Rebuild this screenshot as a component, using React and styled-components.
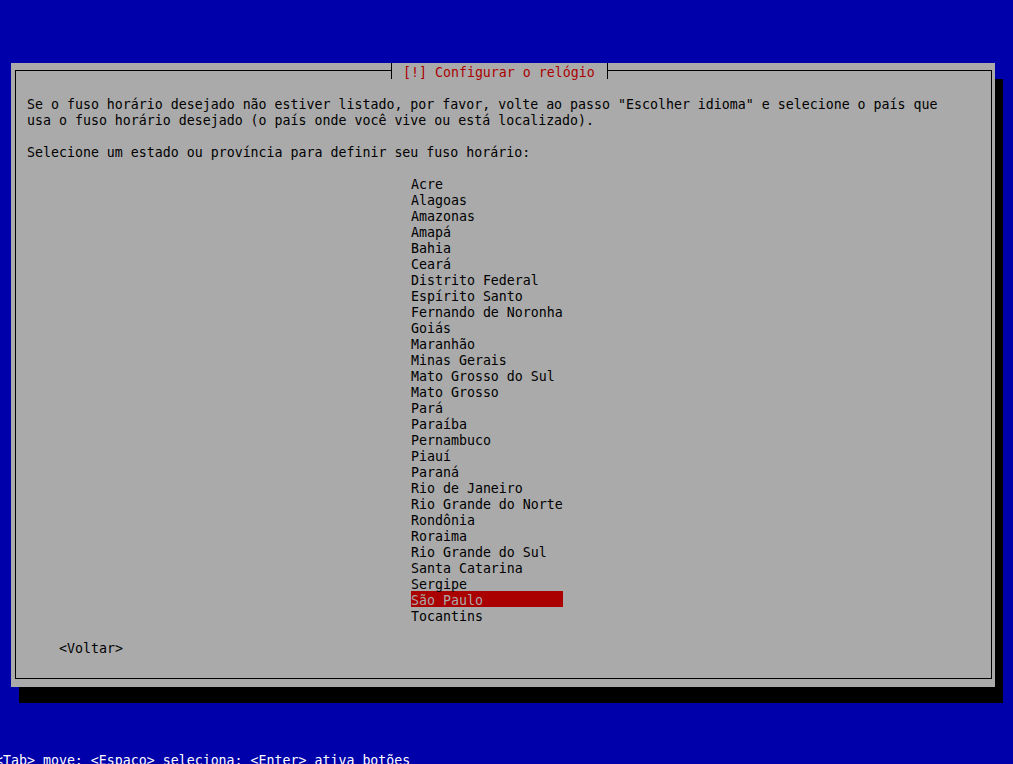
import styled, { createGlobalStyle } from 'styled-components';

const GlobalStyle = createGlobalStyle`
  html, body {
    margin: 0;
    padding: 0;
    background: #0000aa;
  }
  body {
    font-family: "DejaVu Sans Mono", "Liberation Mono", monospace;
    font-size: 13.288px;
    line-height: 16px;
  }
`;

// text sits 2px lower in its 16px cell than the font centres it
const Screen = styled.div`
  width: 1013px;
  height: 764px;
  overflow: hidden;
  background: #0000aa;
  padding: 63px 0 0 11px;
  box-sizing: border-box;
  white-space: pre;
`;

const Dialog = styled.div`
  width: 984px;
  height: 624px;
  box-sizing: border-box;
  background: #aaaaaa;
  box-shadow: 8px 16px 0 0 #000;
  padding: 7px 3px 8px 4px;
  display: flex;
`;

const Frame = styled.div`
  position: relative;
  flex: 1;
  border: 1px solid #000;
  padding: 24px 0 0 11px;
  color: #000;
`;

const Title = styled.div`
  position: absolute;
  top: -8px;
  left: 375px;
  height: 16px;
  box-sizing: border-box;
  padding: 2px 12px 0 11px;
  background: #aaaaaa;
  border-left: 1px solid #000;
  border-right: 1px solid #000;
  color: #aa0000;
`;

const Text = styled.div`
  padding-top: 2px;
  margin-bottom: ${(p) => (p.gap || 2) - 2}px;
`;

const List = styled.ul`
  list-style: none;
  margin: 0 0 16px 384px;
  padding: 0;
  width: 152px;
`;

const Item = styled.li`
  height: 16px;
  box-sizing: border-box;
  padding-top: 2px;
  background: ${(p) => (p.selected ? '#aa0000' : 'transparent')};
  color: ${(p) => (p.selected ? '#aaaaaa' : '#000')};
`;

const Button = styled.div`
  margin-left: 32px;
  padding-top: 2px;
`;

const StatusLine = styled.div`
  margin: 64px 0 0 -16px;
  padding-top: 2px;
  color: #ffffff;
`;

const states = [
  'Acre', 'Alagoas', 'Amazonas', 'Amapá', 'Bahia', 'Ceará', 'Distrito Federal',
  'Espírito Santo', 'Fernando de Noronha', 'Goiás', 'Maranhão', 'Minas Gerais',
  'Mato Grosso do Sul', 'Mato Grosso', 'Pará', 'Paraíba', 'Pernambuco', 'Piauí',
  'Paraná', 'Rio de Janeiro', 'Rio Grande do Norte', 'Rondônia', 'Roraima',
  'Rio Grande do Sul', 'Santa Catarina', 'Sergipe', 'São Paulo', 'Tocantins',
];

const App = () => {
  return (
    <Screen>
      <GlobalStyle />
      <Dialog>
        <Frame>
          <Title>[!] Configurar o relógio</Title>
          <Text gap={16}>
            {'Se o fuso horário desejado não estiver listado, por favor, volte ao passo "Escolher idioma" e selecione o país que\nusa o fuso horário desejado (o país onde você vive ou está localizado).'}
          </Text>
          <Text gap={16}>Selecione um estado ou província para definir seu fuso horário:</Text>
          <List>
            {states.map((s) => (
              <Item key={s} selected={s === 'São Paulo'}>{s}</Item>
            ))}
          </List>
          <Button>&lt;Voltar&gt;</Button>
        </Frame>
      </Dialog>
      <StatusLine>&lt;Tab&gt; move; &lt;Espaço&gt; seleciona; &lt;Enter&gt; ativa botões</StatusLine>
    </Screen>
  );
};

export default App;
